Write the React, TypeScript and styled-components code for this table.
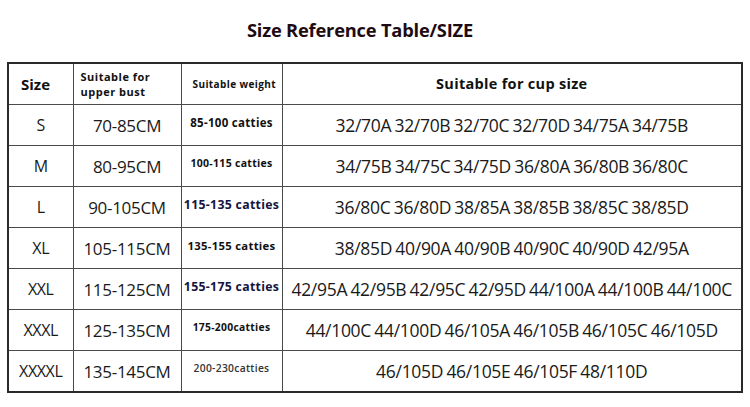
import styled, { createGlobalStyle } from 'styled-components'

const GlobalStyle = createGlobalStyle`
  html, body {
    margin: 0;
    padding: 0;
    background: #fff;
  }
  body {
    font-family: "Open Sans", "Liberation Sans", sans-serif;
    color: #111;
  }
`

const Page = styled.div`
  width: 750px;
  height: 407px;
  padding: 14px 7px 0 7px;
  box-sizing: border-box;
`

const Title = styled.h1`
  margin: 0 0 17px 0;
  padding-right: 30px;
  text-align: center;
  font-size: 18.3px;
  line-height: 31px;
  font-weight: 700;
  color: #1e0b12;
  letter-spacing: -0.2px;
`

const Table = styled.table`
  width: 736px;
  border-collapse: collapse;
  table-layout: fixed;
  border: 2px solid #2a2a2a;
`

const Cell = styled.td<{ $align?: string }>`
  height: 40px;
  padding: 0;
  border: 1px solid #4a4a4a;
  text-align: ${(p) => p.$align || 'center'};
  vertical-align: middle;
  white-space: nowrap;
  overflow: hidden;
`

const HeadText = styled.span<{ $size: number; $spacing?: number; $lh?: number }>`
  display: block;
  font-size: ${(p) => p.$size}px;
  font-weight: 700;
  line-height: ${(p) => p.$lh || 1.2};
  letter-spacing: ${(p) => p.$spacing || 0}px;
  color: #111;
`

const SizeText = styled.span`
  font-size: 16px;
  color: #1a1a1a;
  letter-spacing: -0.4px;
`

const BustText = styled.span`
  font-size: 17px;
  color: #1a1a1a;
  letter-spacing: -0.3px;
`

const WeightText = styled.span<{ $size: number; $navy?: boolean; $light?: boolean }>`
  display: block;
  margin-top: -6px;
  font-size: ${(p) => p.$size}px;
  font-weight: ${(p) => (p.$light ? 600 : 700)};
  color: ${(p) => (p.$navy ? '#15153f' : p.$light ? '#333' : '#111')};
  letter-spacing: 0.3px;
`

const CupText = styled.span`
  font-size: 17.5px;
  color: #1a1a1a;
  letter-spacing: -0.3px;
  word-spacing: -1px;
`

type Row = {
  size: string
  bust: string
  weight: string
  wSize: number
  navy?: boolean
  light?: boolean
  cups: string
}

const rows: Row[] = [
  { size: 'S', bust: '70-85CM', weight: '85-100 catties', wSize: 11.5, cups: '32/70A 32/70B 32/70C 32/70D 34/75A 34/75B' },
  { size: 'M', bust: '80-95CM', weight: '100-115 catties', wSize: 10.5, cups: '34/75B 34/75C 34/75D 36/80A 36/80B 36/80C' },
  { size: 'L', bust: '90-105CM', weight: '115-135 catties', wSize: 12.3, navy: true, cups: '36/80C 36/80D 38/85A 38/85B 38/85C 38/85D' },
  { size: 'XL', bust: '105-115CM', weight: '135-155 catties', wSize: 11.3, cups: '38/85D 40/90A 40/90B 40/90C 40/90D 42/95A' },
  { size: 'XXL', bust: '115-125CM', weight: '155-175 catties', wSize: 12.3, navy: true, cups: '42/95A 42/95B 42/95C 42/95D 44/100A 44/100B 44/100C' },
  { size: 'XXXL', bust: '125-135CM', weight: '175-200catties', wSize: 10.3, cups: '44/100C 44/100D 46/105A 46/105B 46/105C 46/105D' },
  { size: 'XXXXL', bust: '135-145CM', weight: '200-230catties', wSize: 10.3, light: true, cups: '46/105D 46/105E 46/105F 48/110D' },
]

export default function App() {
  return (
    <>
      <GlobalStyle />
      <Page>
        <Title>Size Reference Table/SIZE</Title>
        <Table>
          <colgroup>
            <col style={{ width: 65 }} />
            <col style={{ width: 108 }} />
            <col style={{ width: 101 }} />
            <col />
          </colgroup>
          <thead>
            <tr>
              <Cell as="th" $align="left" style={{ paddingLeft: 12 }}>
                <HeadText $size={15}>Size</HeadText>
              </Cell>
              <Cell as="th" $align="left" style={{ paddingLeft: 7 }}>
                <HeadText $size={11} $spacing={0.5} $lh={1.4}>
                  Suitable for
                  <br />
                  upper bust
                </HeadText>
              </Cell>
              <Cell as="th" $align="left" style={{ paddingLeft: 11 }}>
                <HeadText $size={10} $spacing={0.4}>Suitable weight</HeadText>
              </Cell>
              <Cell as="th">
                <HeadText $size={14.5} $spacing={0.3}>Suitable for cup size</HeadText>
              </Cell>
            </tr>
          </thead>
          <tbody>
            {rows.map((r) => (
              <tr key={r.size}>
                <Cell><SizeText>{r.size}</SizeText></Cell>
                <Cell><BustText>{r.bust}</BustText></Cell>
                <Cell>
                  <WeightText $size={r.wSize} $navy={r.navy} $light={r.light}>{r.weight}</WeightText>
                </Cell>
                <Cell><CupText>{r.cups}</CupText></Cell>
              </tr>
            ))}
          </tbody>
        </Table>
      </Page>
    </>
  )
}
